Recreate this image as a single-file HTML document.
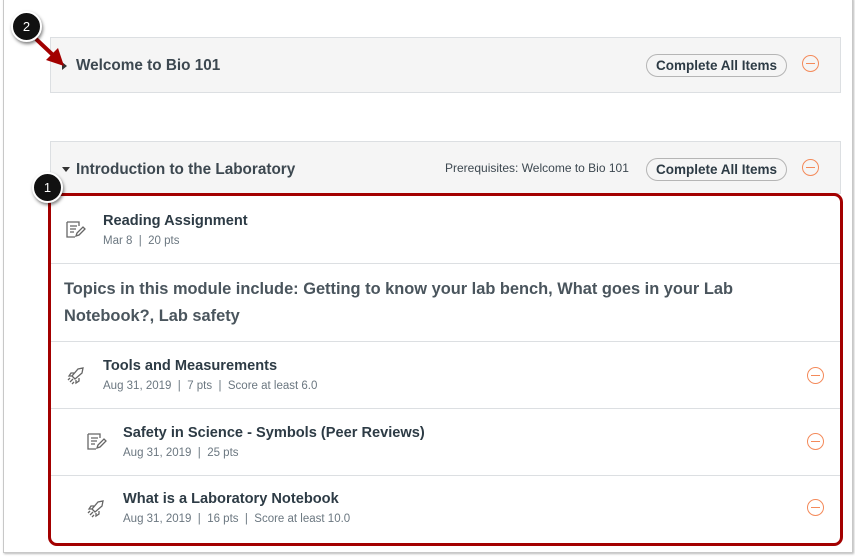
<!DOCTYPE html>
<html><head><meta charset="utf-8"><style>
*{box-sizing:border-box;margin:0;padding:0}
body{width:855px;height:557px;background:#fff;position:relative;overflow:hidden;font-family:"Liberation Sans",sans-serif;color:#2d3b45}
.page{position:absolute;left:3px;top:-2px;width:850px;height:555px;border:1px solid #c8c8c8;box-shadow:1px 1px 2px #bbb;background:#fff}
.hdr{position:absolute;left:50px;width:791px;background:#f5f5f5;border:1px solid #dcdfe2}
.title{position:absolute;left:25px;font-size:15.3px;font-weight:bold;color:#3d4850}
.tri{position:absolute;left:11px;width:0;height:0}
.btn{position:absolute;left:595px;width:141px;height:23px;border:1px solid #b5b5b5;border-radius:12px;background:#f5f5f5;font-size:13.5px;font-weight:bold;text-align:center;line-height:21px;color:#2d3b45}
.minus{position:absolute;width:17px;height:17px;border:1.5px solid #f48a5a;border-radius:50%}
.minus:after{content:"";position:absolute;left:3px;right:3px;top:6.5px;height:1.5px;background:#f48a5a}
.box{position:absolute;left:48px;top:193px;width:795px;height:353px;border:3px solid #a30000;border-radius:9px}
.row{position:absolute;left:50px;width:791px;border-bottom:1px solid #dcdfe2}
.it{position:absolute;font-size:14.6px;font-weight:bold;color:#2d3b45}
.meta{position:absolute;font-size:11.5px;color:#6b7780}
.badge{position:absolute;width:31px;height:31px;border-radius:50%;background:#111;border:2px solid #fff;box-shadow:1px 2px 3px rgba(0,0,0,.5);color:#fff;font-size:13px;text-align:center;line-height:27px}
svg.ic{position:absolute}
</style></head><body>
<div class="page"></div>

<div class="hdr" style="top:37px;height:56px">
 <div class="tri" style="top:24px;border-left:5px solid #333;border-top:4px solid transparent;border-bottom:4px solid transparent"></div>
 <div class="title" style="top:19px">Welcome to Bio 101</div>
 <div class="btn" style="top:16px">Complete All Items</div>
 <div class="minus" style="left:751px;top:17px"></div>
</div>

<div class="hdr" style="top:141px;height:53px">
 <div class="tri" style="top:25px;border-top:5px solid #333;border-left:4px solid transparent;border-right:4px solid transparent"></div>
 <div class="title" style="top:19px">Introduction to the Laboratory</div>
 <div style="position:absolute;left:394px;top:19px;font-size:12px;color:#3d4850">Prerequisites: Welcome to Bio 101</div>
 <div class="btn" style="top:16px">Complete All Items</div>
 <div class="minus" style="left:751px;top:17px"></div>
</div>

<div class="row" style="top:194px;height:70px">
 <svg class="ic" style="left:16px;top:27px" width="20" height="18" viewBox="0 0 20 18" fill="none" stroke="#666" stroke-width="1.3"><path d="M1 1h12v4M1 1v15h8M4 5h7M4 8h6M4 11h4"/><path d="M10 15l1-3 6-6 2 2-6 6z"/></svg>
 <div class="it" style="left:53px;top:19px">Reading Assignment</div>
 <div class="meta" style="left:53px;top:41px">Mar 8 &nbsp;|&nbsp; 20 pts</div>
</div>
<div class="row" style="top:264px;height:78px">
 <div style="position:absolute;left:14px;top:12px;width:720px;font-size:16.4px;font-weight:bold;line-height:27px;color:#4a555d">Topics in this module include: Getting to know your lab bench, What goes in your Lab Notebook?, Lab safety</div>
</div>
<div class="row" style="top:342px;height:67px">
 <svg class="ic" style="left:17px;top:25px" width="18" height="18" viewBox="0 0 18 18" fill="none" stroke="#666" stroke-width="1.3"><path d="M7 11l-2-2 6-7 5-1-1 5-7 6z M5 9l-3 0 2-3 3 0 M9 13l0 3 3-2 0-3 M3 15l3-3 M1 13l2-2 M5 17l2-2"/></svg>
 <div class="it" style="left:53px;top:16px">Tools and Measurements</div>
 <div class="meta" style="left:53px;top:38px">Aug 31, 2019 &nbsp;|&nbsp; 7 pts &nbsp;|&nbsp; Score at least 6.0</div>
 <div class="minus" style="left:757px;top:25px"></div>
</div>
<div class="row" style="top:409px;height:67px">
 <svg class="ic" style="left:37px;top:24px" width="20" height="18" viewBox="0 0 20 18" fill="none" stroke="#666" stroke-width="1.3"><path d="M1 1h12v4M1 1v15h8M4 5h7M4 8h6M4 11h4"/><path d="M10 15l1-3 6-6 2 2-6 6z"/></svg>
 <div class="it" style="left:73px;top:16px">Safety in Science - Symbols (Peer Reviews)</div>
 <div class="meta" style="left:73px;top:38px">Aug 31, 2019 &nbsp;|&nbsp; 25 pts</div>
 <div class="minus" style="left:757px;top:24px"></div>
</div>
<div class="row" style="top:476px;height:67px;border-bottom:none">
 <svg class="ic" style="left:37px;top:24px" width="18" height="18" viewBox="0 0 18 18" fill="none" stroke="#666" stroke-width="1.3"><path d="M7 11l-2-2 6-7 5-1-1 5-7 6z M5 9l-3 0 2-3 3 0 M9 13l0 3 3-2 0-3 M3 15l3-3 M1 13l2-2 M5 17l2-2"/></svg>
 <div class="it" style="left:73px;top:15px">What is a Laboratory Notebook</div>
 <div class="meta" style="left:73px;top:37px">Aug 31, 2019 &nbsp;|&nbsp; 16 pts &nbsp;|&nbsp; Score at least 10.0</div>
 <div class="minus" style="left:757px;top:23px"></div>
</div>

<div class="box"></div>

<svg style="position:absolute;left:0;top:0" width="80" height="80"><path d="M36 39L54 56" stroke="#a30000" stroke-width="4"/><path d="M64 66L46 60 58 48z" fill="#a30000"/></svg>
<div class="badge" style="left:11px;top:11px">2</div>
<div class="badge" style="left:32px;top:172px">1</div>
</body></html>
